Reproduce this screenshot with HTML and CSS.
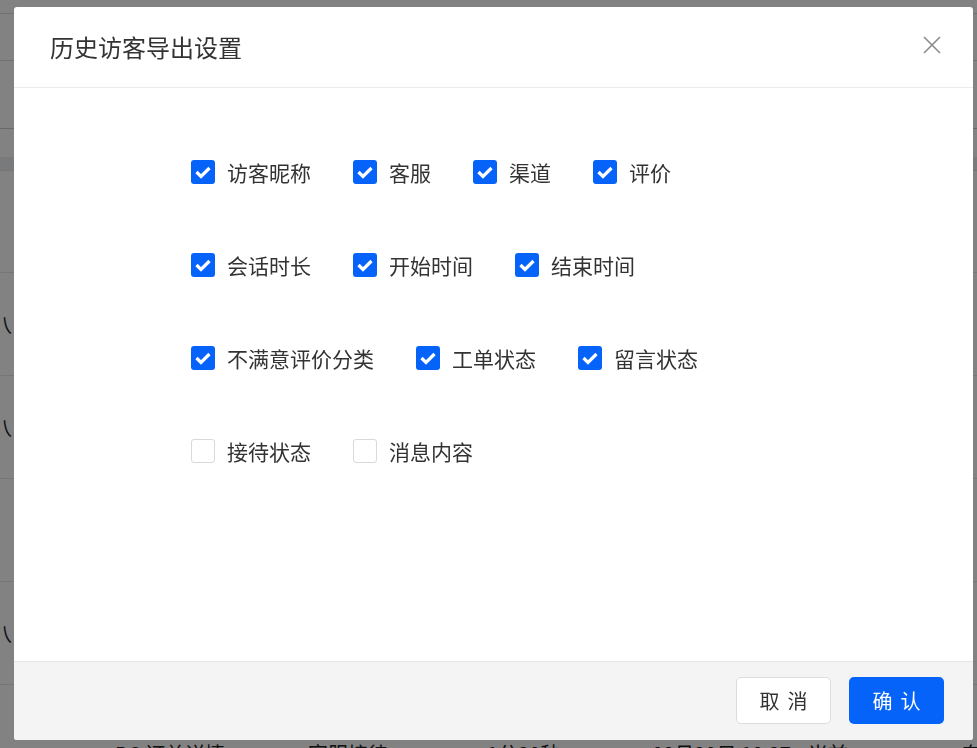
FILE: index.html
```html
<!DOCTYPE html>
<html>

<head>
	<title>历史访客导出设置</title>
	<link rel="stylesheet" href="styles.css">
</head>

<body>

	<!-- page behind the dialog -->
	<div class="page">
		<div class="page_top"></div>
		<div class="page_tabs"></div>
		<div class="page_head"></div>
		<div class="page_band"></div>
		<div class="page_row"><span class="cell c0">八</span></div>
		<div class="page_row"><span class="cell c0">八</span></div>
		<div class="page_row"></div>
		<div class="page_row"><span class="cell c0">八</span></div>
		<div class="page_row page_row_last">
			<span class="cell c1">PC 订单详情</span>
			<span class="cell c2">客服接待</span>
			<span class="cell c3">1分30秒</span>
			<span class="cell c4">08月20日 10:37</span>
			<span class="cell c5">当前</span>
			<span class="cell c6">东</span>
		</div>
	</div>

	<div class="mask"></div>

	<div class="dialog">
		<div class="dialog_header">
			<div class="dialog_title">历史访客导出设置</div>
			<svg class="dialog_close" width="20" height="20" viewBox="0 0 20 20">
				<path d="M2 2 L18 18 M18 2 L2 18" stroke="#8a8a8a" stroke-width="1.6" fill="none" />
			</svg>
		</div>

		<div class="dialog_body">
			<div class="check_row">
				<label class="check_item"><span class="check_box checked"></span>访客昵称</label>
				<label class="check_item"><span class="check_box checked"></span>客服</label>
				<label class="check_item"><span class="check_box checked"></span>渠道</label>
				<label class="check_item"><span class="check_box checked"></span>评价</label>
			</div>
			<div class="check_row">
				<label class="check_item"><span class="check_box checked"></span>会话时长</label>
				<label class="check_item"><span class="check_box checked"></span>开始时间</label>
				<label class="check_item"><span class="check_box checked"></span>结束时间</label>
			</div>
			<div class="check_row">
				<label class="check_item"><span class="check_box checked"></span>不满意评价分类</label>
				<label class="check_item"><span class="check_box checked"></span>工单状态</label>
				<label class="check_item"><span class="check_box checked"></span>留言状态</label>
			</div>
			<div class="check_row">
				<label class="check_item"><span class="check_box"></span>接待状态</label>
				<label class="check_item"><span class="check_box"></span>消息内容</label>
			</div>
		</div>

		<div class="dialog_footer">
			<button class="btn btn_cancel">取消</button>
			<button class="btn btn_ok">确认</button>
		</div>
	</div>

</body>

</html>
```

FILE: styles.css
```css
html,
body {
	margin: 0;
	height: 100%;
	overflow: hidden;
	font-family: "Noto Sans CJK SC", "Noto Sans", sans-serif;
	color: #333;
	background: #fff;
}

/* background page */
.page {
	width: 100%;
	height: 748px;
	overflow: hidden;
}

.page_top {
	height: 13px;
	border-bottom: 1px solid #ddd;
}

.page_tabs {
	height: 46px;
	border-bottom: 1px solid #ddd;
}

.page_head {
	height: 67px;
	border-bottom: 1px solid #ccc;
}

.page_band {
	height: 13px;
	margin-top: 28px;
	background: #eef0f2;
	border-bottom: 1px solid #e8e8e8;
	margin-bottom: 101px;
}

.page_row {
	height: 102px;
	border-top: 1px solid #e8e8e8;
	display: flex;
	align-items: center;
	font-size: 20px;
	color: #222;
	position: relative;
}

.page_row_last {
	align-items: flex-start;
	padding-top: 54px;
	height: 48px;
}

.cell {
	position: absolute;
}

.c0 {
	left: -8px;
}

.c1 {
	left: 115px;
}

.c2 {
	left: 308px;
}

.c3 {
	left: 487px;
}

.c4 {
	left: 652px;
}

.c5 {
	left: 808px;
}

.c6 {
	left: 962px;
}

.mask {
	position: fixed;
	inset: 0;
	background: rgba(0, 0, 0, 0.49);
}

/* dialog */
.dialog {
	position: fixed;
	left: 14px;
	top: 7px;
	width: 959px;
	height: 733px;
	background: #fff;
	border-radius: 3px;
	display: flex;
	flex-direction: column;
	overflow: hidden;
}

.dialog_header {
	height: 80px;
	border-bottom: 1px solid #ebebeb;
	display: flex;
	align-items: center;
	justify-content: space-between;
	padding: 0 31px 0 36px;
}

.dialog_title {
	font-size: 24px;
	color: #333;
	margin-top: -2px;
}

.dialog_close {
	margin-top: -4px;
}

.dialog_body {
	flex: 1;
	padding: 72px 0 0 177px;
	box-sizing: border-box;
}

.check_row {
	display: flex;
	height: 24px;
	margin-bottom: 69px;
}

.check_item {
	display: flex;
	align-items: center;
	font-size: 21px;
	line-height: 22px;
	color: #333;
	margin-right: 42px;
}

.check_box {
	width: 24px;
	height: 24px;
	box-sizing: border-box;
	border: 1px solid #d9d9d9;
	border-radius: 3px;
	margin-right: 12px;
	background: #fff;
}

.check_box.checked {
	border: none;
	background: #0563fa url("data:image/svg+xml,%3Csvg xmlns='http://www.w3.org/2000/svg' width='24' height='24'%3E%3Cpath d='M5.5 12 L10 16.5 L18.5 8' stroke='%23fff' stroke-width='3.2' fill='none'/%3E%3C/svg%3E") no-repeat center;
}

.dialog_footer {
	height: 79px;
	border-top: 1px solid #e6e6e6;
	background: #f4f4f4;
	display: flex;
	justify-content: flex-end;
	align-items: flex-start;
	gap: 18px;
	padding: 15px 29px 0 0;
	box-sizing: border-box;
}

.btn {
	width: 95px;
	height: 47px;
	border-radius: 5px;
	font-family: "Noto Sans CJK SC", sans-serif;
	font-size: 20px;
	letter-spacing: 8px;
	text-indent: 8px;
	cursor: pointer;
}

.btn_cancel {
	background: #fff;
	border: 1px solid #dcdcdc;
	color: #333;
}

.btn_ok {
	background: #0563fa;
	border: none;
	color: #fff;
}
```
